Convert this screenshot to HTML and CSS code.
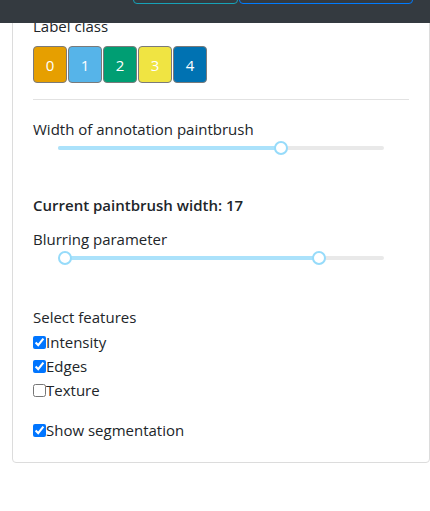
FILE: index.html
```html
<!DOCTYPE html>
<html>
<head>
<meta charset="utf-8">
<link rel="stylesheet" href="styles.css">
</head>
<body>
<nav class="navbar">
  <button class="nav-btn nav-btn-info" aria-label="Download"></button>
  <button class="nav-btn nav-btn-primary" aria-label="Upload image"></button>
</nav>
<div class="card">
  <div class="field-label">Label class</div>
  <div class="class-group">
    <button class="class-btn c0">0</button>
    <button class="class-btn c1">1</button>
    <button class="class-btn c2">2</button>
    <button class="class-btn c3">3</button>
    <button class="class-btn c4">4</button>
  </div>
  <hr class="divider">
  <div class="field-label">Width of annotation paintbrush</div>
  <div class="slider slider-width">
    <div class="rail">
      <div class="track" style="left:0%;width:68.4%"></div>
      <div class="handle" style="left:68.4%"></div>
    </div>
  </div>
  <div class="current">Current paintbrush width: 17</div>
  <div class="field-label">Blurring parameter</div>
  <div class="slider slider-blur">
    <div class="rail">
      <div class="track" style="left:2.3%;width:77.7%"></div>
      <div class="handle" style="left:2.3%"></div>
      <div class="handle" style="left:80%"></div>
    </div>
  </div>
  <div class="field-label features-label">Select features</div>
  <label class="check"><input type="checkbox" checked>Intensity</label>
  <label class="check"><input type="checkbox" checked>Edges</label>
  <label class="check"><input type="checkbox">Texture</label>
  <label class="check show-seg"><input type="checkbox" checked>Show segmentation</label>
</div>
</body>
</html>
```
FILE: styles.css
```css
html, body {
  margin: 0;
  padding: 0;
  background: #fff;
}
body {
  font-family: "Open Sans", "Noto Sans", sans-serif;
  font-size: 15px;
  line-height: 24px;
  color: #212529;
}
.navbar {
  position: fixed;
  top: 0;
  left: 0;
  right: 0;
  height: 23px;
  background: #343a40;
  display: flex;
  justify-content: flex-end;
  align-items: flex-end;
  gap: 1px;
  padding-right: 17px;
  box-sizing: border-box;
  z-index: 10;
}
.nav-btn {
  height: 38px;
  margin-bottom: 19px;
  background: transparent;
  border: 1px solid;
  border-radius: 4px;
  padding: 0;
}
.nav-btn-info {
  width: 105px;
  border-color: #17a2b8;
}
.nav-btn-primary {
  width: 174px;
  border-color: #007bff;
}
.card {
  margin: -8px 0 0 12px;
  width: 418px;
  box-sizing: border-box;
  border: 1px solid #dcdcdc;
  border-radius: 4px;
  padding: 21px 20px 20px;
}
.field-label {
  display: block;
}
.class-group {
  display: flex;
  gap: 1px;
  margin-top: 8px;
}
.class-btn {
  width: 34px;
  height: 37px;
  border: 1px solid #7a7a7a;
  border-radius: 4px;
  color: #fff;
  font-family: inherit;
  font-size: 15px;
  padding: 0;
  text-align: center;
}
.c0 { background: #e69f00; }
.c1 { background: #56b4e9; }
.c2 { background: #009e73; }
.c3 { background: #f0e442; }
.c4 { background: #0072b2; }
.divider {
  border: 0;
  border-top: 1px solid #e2e2e2;
  margin: 16px 0 17px;
}
.slider {
  padding: 5px 25px 0;
}
.slider-width {
  margin-bottom: 43px;
}
.slider-blur {
  margin-bottom: 45px;
}
.rail {
  position: relative;
  height: 4px;
  background: #e9e9e9;
  border-radius: 6px;
}
.track {
  position: absolute;
  top: 0;
  height: 4px;
  background: #abe2fb;
  border-radius: 6px;
}
.handle {
  position: absolute;
  top: 50%;
  width: 14px;
  height: 14px;
  box-sizing: border-box;
  border: 2px solid #96dbfa;
  background: #fff;
  border-radius: 50%;
  transform: translate(-50%, -50%);
}
.current {
  font-weight: 600;
  margin-bottom: 10px;
}
.features-label {
  margin-bottom: 1px;
}
.check {
  display: flex;
  align-items: center;
}
.check input {
  margin: 0;
  width: 13px;
  height: 13px;
}
.show-seg {
  margin-top: 16px;
}
```
